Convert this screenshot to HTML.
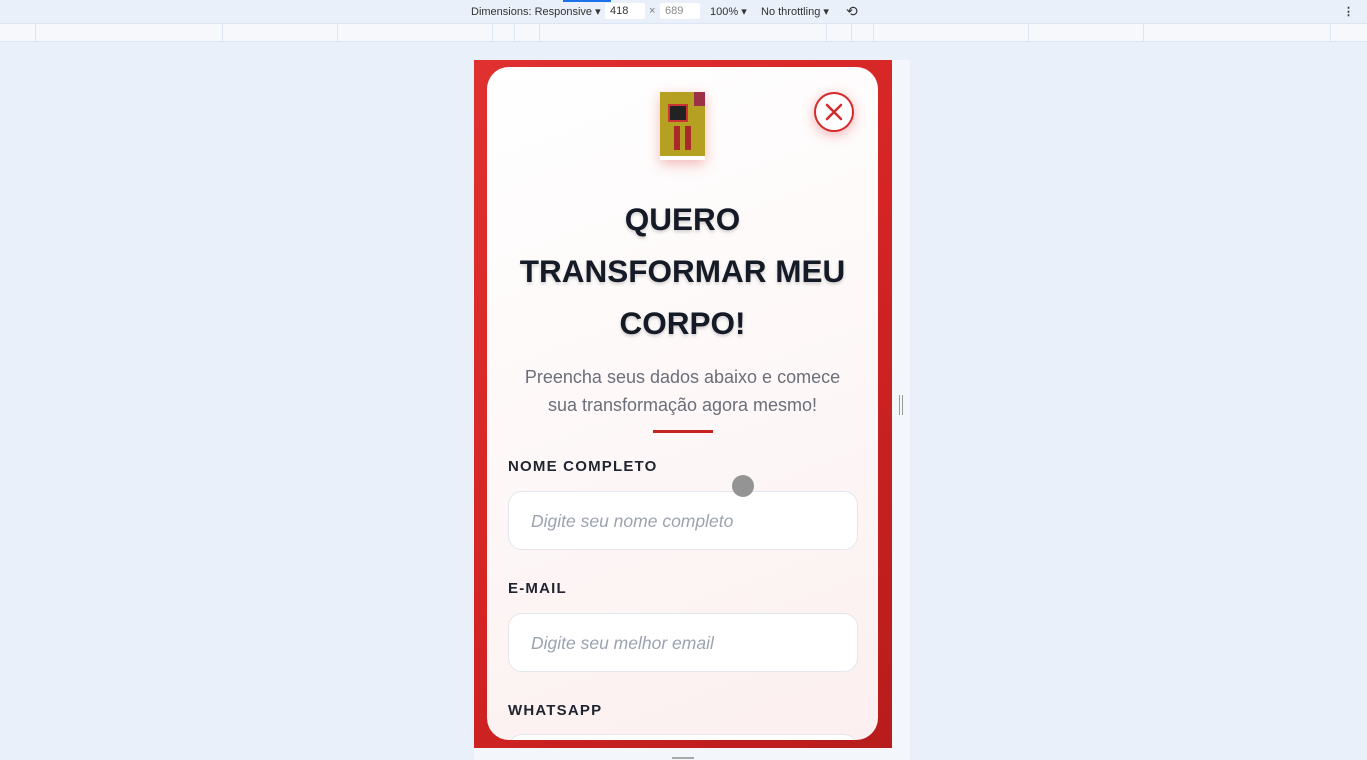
<!DOCTYPE html>
<html><head><meta charset="utf-8"><style>
*{box-sizing:border-box;margin:0;padding:0}
body{width:1367px;height:760px;background:#eaf0f9;font-family:"Liberation Sans",sans-serif;position:relative;overflow:hidden}
.top{position:absolute;top:0;left:0;width:1367px;height:23px;font-size:11px;color:#333}
.top span{position:absolute;top:5px}
.box{position:absolute;top:3px;height:16px;background:#fff;border-radius:2px;font-size:11px;color:#333;padding:2px 5px}
.ruler{position:absolute;top:23px;left:0;width:1367px;height:19px;background:#f6f8fb;border-top:1px solid #dde5f2;border-bottom:1px solid #dde5f2}
.ruler i{position:absolute;top:0;width:1px;height:17px;background:#dde5f2}
.red{position:absolute;left:474px;top:60px;width:418px;height:688px;background:linear-gradient(135deg,#e03131,#d42424 50%,#b71c1c)}
.strip{position:absolute;left:892px;top:60px;width:18px;height:688px;background:#f3f6fa}
.bot{position:absolute;left:474px;top:748px;width:436px;height:12px;background:#f3f6fa}
.card{position:absolute;left:487px;top:67px;width:391px;height:673px;border-radius:22px;background:linear-gradient(160deg,#fff 0%,#fdf6f6 60%,#fcefef 100%);overflow:hidden}
.book{position:absolute;left:173px;top:25px;width:45px;height:68px;background:#b5a022;box-shadow:0 4px 12px rgba(220,60,60,.35)}
.close{position:absolute;left:327px;top:25px;width:40px;height:40px;border-radius:50%;border:2px solid #d42a2a;background:#fff;box-shadow:0 3px 12px rgba(220,40,40,.35)}
h1{position:absolute;left:-10px;top:126px;width:411px;text-align:center;font-size:31.5px;font-weight:bold;line-height:52px;color:#141a26;text-shadow:0 2px 3px rgba(0,0,0,.18)}
.sub{position:absolute;left:0;top:296px;width:391px;text-align:center;font-size:18px;line-height:28px;color:#6b6f7a}
.line{position:absolute;left:166px;top:363px;width:60px;height:3px;background:#c52222}
.lab{position:absolute;left:21px;font-size:15px;font-weight:bold;letter-spacing:1.2px;color:#1f2430}
.inp{position:absolute;left:21px;width:350px;height:59px;background:#fff;border:1.5px solid #e3e6ec;border-radius:14px;font-size:17.5px;font-style:italic;color:#9ca3af;padding:19px 0 0 22px}
.dot{position:absolute;left:732px;top:475px;width:22px;height:22px;border-radius:50%;background:#8a8a8a;opacity:.9}
</style></head><body>
<div class="top">
<span style="left:471px">Dimensions: Responsive ▾</span>
<div class="box" style="left:605px;width:40px">418</div>
<span style="left:649px;color:#777">×</span>
<div class="box" style="left:660px;width:40px;color:#888">689</div>
<span style="left:710px">100% ▾</span>
<span style="left:761px">No throttling ▾</span>
<span style="left:846px;font-size:14px;top:3px">⟲</span>
<span style="left:1343px;font-weight:bold">⋮</span>
<div style="position:absolute;left:563px;top:0;width:48px;height:2px;background:#1a73e8"></div>
</div>
<div class="ruler"><i style="left:35px"></i><i style="left:222px"></i><i style="left:337px"></i><i style="left:492px"></i><i style="left:514px"></i><i style="left:539px"></i><i style="left:826px"></i><i style="left:851px"></i><i style="left:873px"></i><i style="left:1028px"></i><i style="left:1143px"></i><i style="left:1330px"></i></div>
<div class="red"></div><div class="strip"></div><div class="bot"></div>
<div style="position:absolute;left:899px;top:395px;width:4px;height:20px;border-left:1px solid #999;border-right:1px solid #999"></div>
<div style="position:absolute;left:672px;top:757px;width:22px;height:2px;background:#aaa"></div>
<div class="card">
<div class="book">
<div style="position:absolute;right:0;top:0;width:11px;height:14px;background:#9c3046"></div>
<div style="position:absolute;left:8px;top:12px;width:20px;height:18px;background:#222;border:2px solid #c33"></div>
<div style="position:absolute;left:14px;top:34px;width:6px;height:24px;background:#a82a2a"></div>
<div style="position:absolute;left:25px;top:34px;width:6px;height:24px;background:#a82a2a"></div>
<div style="position:absolute;left:0;bottom:0;width:45px;height:4px;background:#fff"></div>
</div>
<div class="close"><svg width="36" height="36" viewBox="0 0 36 36" style="position:absolute;left:0;top:0"><path d="M11 11L25 25M25 11L11 25" stroke="#d42a2a" stroke-width="2.5" stroke-linecap="round"/></svg></div>
<h1>QUERO<br>TRANSFORMAR MEU<br>CORPO!</h1>
<div class="sub">Preencha seus dados abaixo e comece<br>sua transformação agora mesmo!</div>
<div class="line"></div>
<div class="lab" style="top:391px">NOME COMPLETO</div>
<div class="inp" style="top:424px">Digite seu nome completo</div>
<div class="lab" style="top:513px">E-MAIL</div>
<div class="inp" style="top:546px">Digite seu melhor email</div>
<div class="lab" style="top:635px">WHATSAPP</div>
<div class="inp" style="top:667px"></div>
</div>
<div class="dot"></div>
</body></html>
